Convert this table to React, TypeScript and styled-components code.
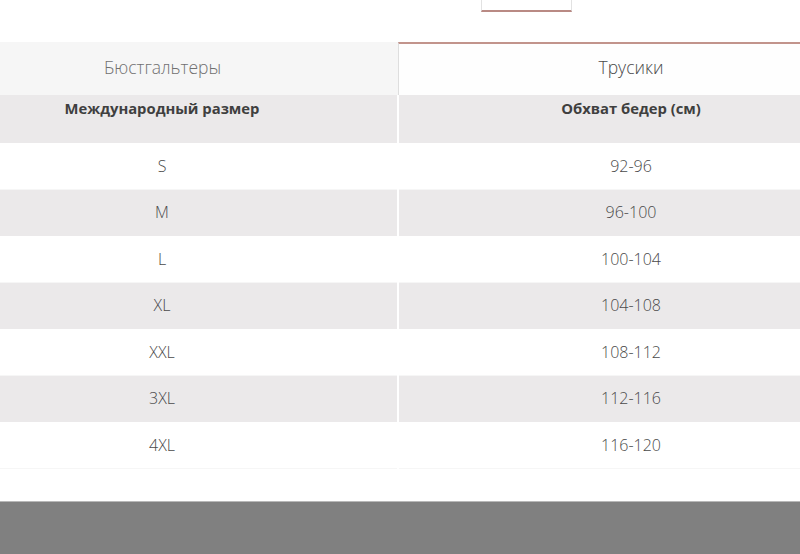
import React from "react";
import styled, { createGlobalStyle } from "styled-components";

const Global = createGlobalStyle`
  html, body { margin: 0; padding: 0; background: #fff; }
  body { width: 800px; height: 554px; overflow: hidden; font-family: "Open Sans", "DejaVu Sans", sans-serif; }
`;

const Page = styled.div`
  width: 800px;
  height: 554px;
  display: flex;
  flex-direction: column;
  background: #fff;
  overflow: hidden;
`;

const Content = styled.div`
  width: 936px;
  margin-left: -73px;
  display: flex;
  flex-direction: column;
`;

const TopArea = styled.div`
  height: 42px;
  display: flex;
  padding-left: 554px;
  box-sizing: border-box;
`;

const TopBox = styled.div`
  width: 89px;
  height: 10px;
  border-left: 1px solid #e2e2e2;
  border-right: 1px solid #e2e2e2;
  border-bottom: 2px solid #b98a84;
  background: #fff;
`;

const Tabs = styled.div`
  display: grid;
  grid-template-columns: 471px 1fr;
  height: 53px;
`;

const Tab = styled.div<{ $active?: boolean }>`
  display: flex;
  align-items: center;
  justify-content: center;
  font-size: 17.5px;
  font-weight: 300;
  color: ${(p) => (p.$active ? "#4a4a4a" : "#707070")};
  background: ${(p) => (p.$active ? "#fefefe" : "#f6f6f6")};
  border-top: ${(p) => (p.$active ? "2px solid #c2948c" : "2px solid #f6f6f6")};
  border-left: ${(p) => (p.$active ? "1px solid #dedede" : "none")};
  box-sizing: border-box;
  padding-bottom: 6px;
`;

const Table = styled.div`
  display: grid;
  grid-template-columns: 470px 1fr;
  column-gap: 2px;
`;

const HeadCell = styled.div`
  height: 48px;
  background: #ebe9ea;
  display: flex;
  justify-content: center;
  align-items: flex-start;
  padding-top: 3px;
  box-sizing: border-box;
  font-size: 14.8px;
  font-weight: 700;
  color: #3f3f3f;
`;

const Cell = styled.div<{ $alt: boolean }>`
  height: 46.5px;
  background: ${(p) => (p.$alt ? "#ebe9ea" : "#fff")};
  display: flex;
  justify-content: center;
  align-items: center;
  font-size: 16px;
  font-weight: 300;
  color: #4a4a4a;
  box-sizing: border-box;
  border-bottom: 1px solid ${(p) => (p.$alt ? "#ebe9ea" : "#f6f6f6")};
`;

const Spacer = styled.div`
  flex: 1;
  background: #fff;
`;

const Footer = styled.div`
  height: 52px;
  background: #808080;
  border-top: 1px solid #b8b8b8;
`;

const rows: [string, string][] = [
  ["S", "92-96"],
  ["M", "96-100"],
  ["L", "100-104"],
  ["XL", "104-108"],
  ["XXL", "108-112"],
  ["3XL", "112-116"],
  ["4XL", "116-120"],
];

export default function App() {
  return (
    <>
      <Global />
      <Page>
        <Content>
          <TopArea>
            <TopBox />
          </TopArea>
          <Tabs>
            <Tab>Бюстгальтеры</Tab>
            <Tab $active>Трусики</Tab>
          </Tabs>
          <Table>
            <HeadCell>Международный размер</HeadCell>
            <HeadCell>Обхват бедер (см)</HeadCell>
            {rows.map(([a, b], i) => (
              <React.Fragment key={a}>
                <Cell $alt={i % 2 === 1}>{a}</Cell>
                <Cell $alt={i % 2 === 1}>{b}</Cell>
              </React.Fragment>
            ))}
          </Table>
        </Content>
        <Spacer />
        <Footer />
      </Page>
    </>
  );
}
